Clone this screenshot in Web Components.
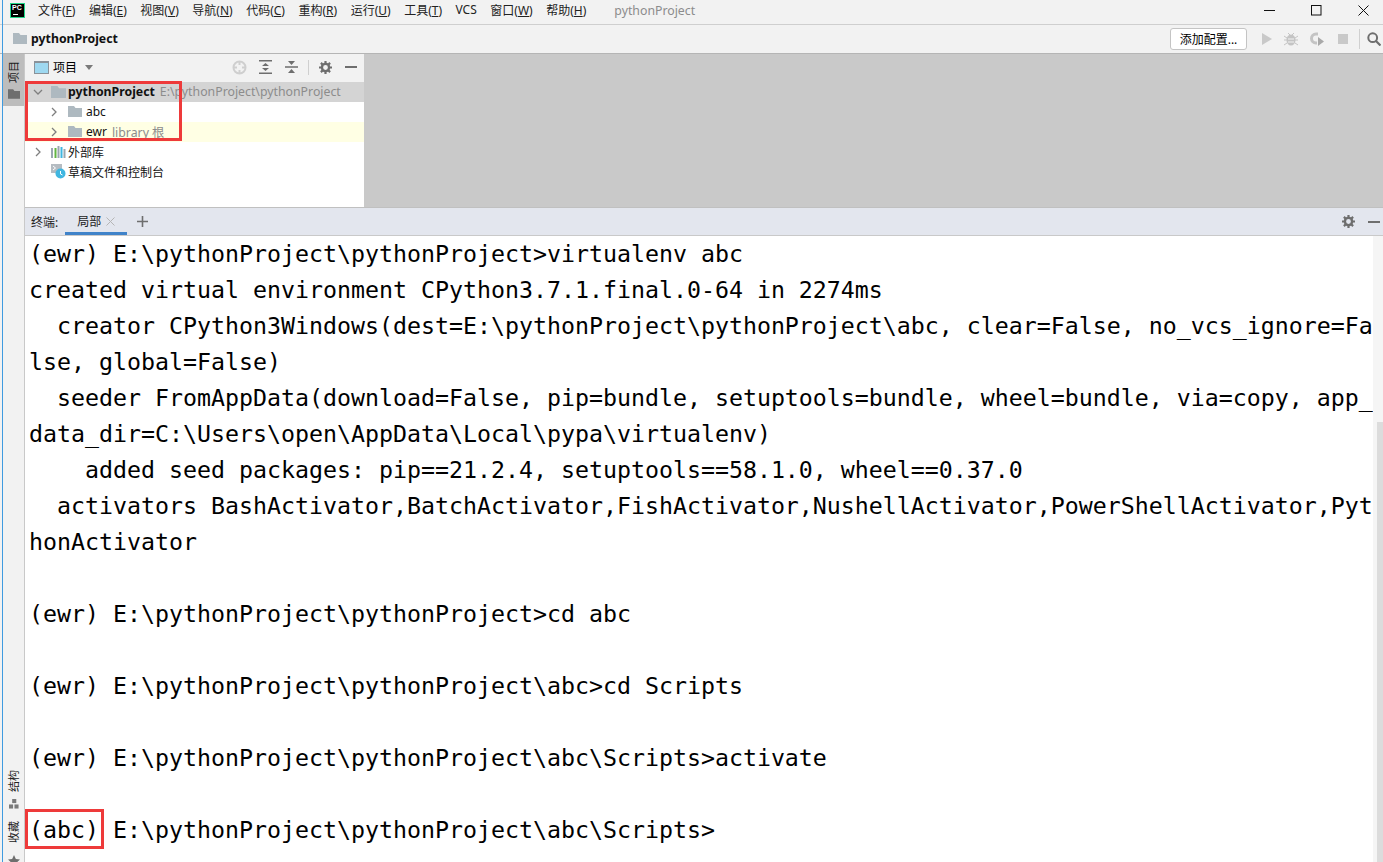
<!DOCTYPE html>
<html><head><meta charset="utf-8">
<style>
html,body{margin:0;padding:0;height:100%;overflow:hidden;background:#f2f2f2}
body{font-family:"Noto Sans","Noto Sans CJK SC",sans-serif;color:#000}
ide-window{height:862px}
</style></head><body>
<ide-window>
  <title-bar slot="title"></title-bar>
  <nav-bar slot="nav"></nav-bar>
  <side-stripe slot="stripe"></side-stripe>
  <project-panel slot="project"></project-panel>
  <terminal-panel slot="terminal">(ewr) E:\pythonProject\pythonProject&gt;virtualenv abc
created virtual environment CPython3.7.1.final.0-64 in 2274ms
  creator CPython3Windows(dest=E:\pythonProject\pythonProject\abc, clear=False, no_vcs_ignore=Fa
lse, global=False)
  seeder FromAppData(download=False, pip=bundle, setuptools=bundle, wheel=bundle, via=copy, app_
data_dir=C:\Users\open\AppData\Local\pypa\virtualenv)
    added seed packages: pip==21.2.4, setuptools==58.1.0, wheel==0.37.0
  activators BashActivator,BatchActivator,FishActivator,NushellActivator,PowerShellActivator,Pyt
honActivator

(ewr) E:\pythonProject\pythonProject&gt;cd abc

(ewr) E:\pythonProject\pythonProject\abc&gt;cd Scripts

(ewr) E:\pythonProject\pythonProject\abc\Scripts&gt;activate

(abc) E:\pythonProject\pythonProject\abc\Scripts&gt;</terminal-panel>
</ide-window>
<script>
const sans = '"Noto Sans","Noto Sans CJK SC",sans-serif';
const folder = (w, h, c) => `<svg width="${w}" height="${h}" viewBox="0 0 14 11"><path fill="${c}" d="M0 0h6l1.5 2H14v9H0z"/></svg>`;
const chev = d => `<svg width="10" height="10" viewBox="0 0 10 10" fill="none" stroke="#7f7f7f" stroke-width="1.3"><path d="${d}"/></svg>`;
const gear = `<svg width="13" height="13" viewBox="0 0 13 13"><circle cx="6.5" cy="6.5" r="3.6" fill="none" stroke="#6e6e6e" stroke-width="2.4"/><path d="M6.5 0v3M6.5 10v3M0 6.5h3M10 6.5h3M1.9 1.9L4 4M9 9l2.1 2.1M1.9 11.1L4 9M9 4l2.1-2.1" stroke="#6e6e6e" stroke-width="2.2"/></svg>`;

class IdeWindow extends HTMLElement {
  connectedCallback() {
    this.attachShadow({ mode: 'open' });
    this.shadowRoot.innerHTML = `
      <style>
        :host { display: flex; flex-direction: column; width: 1383px; position: relative; overflow: hidden; }
        .body { flex: 1; display: flex; min-height: 0; }
        .main { flex: 1; display: flex; flex-direction: column; min-width: 0; }
        .mark { position: absolute; border: 3px solid #ee3a3a; box-sizing: border-box; pointer-events: none; }
        .edge { position: absolute; left: 2px; top: 0; bottom: 0; width: 1px; background: #3f9be0; }
      </style>
      <slot name="title"></slot>
      <slot name="nav"></slot>
      <div class="body">
        <slot name="stripe"></slot>
        <div class="main">
          <slot name="project"></slot>
          <slot name="terminal"></slot>
        </div>
      </div>
      <div class="edge"></div>
      <div class="mark" style="left:25px;top:81px;width:157px;height:60px"></div>
      <div class="mark" style="left:25px;top:809px;width:79px;height:40px"></div>
    `;
  }
}

class TitleBar extends HTMLElement {
  connectedCallback() {
    this.attachShadow({ mode: 'open' });
    const items = ['文件(F)','编辑(E)','视图(V)','导航(N)','代码(C)','重构(R)','运行(U)','工具(T)','VCS','窗口(W)','帮助(H)'];
    this.shadowRoot.innerHTML = `
      <style>
        :host { display: flex; align-items: center; height: 25px; box-sizing: border-box; padding: 0 0 4px 10px; border-bottom: 1px solid #cfcfcf; background: #f2f2f2; font: 12px ${sans}; color: #222; }
        .logo { width: 15px; height: 15px; background: #000; border: 1px solid #21d789; box-sizing: border-box; color: #fff; font: bold 7px/8px "Liberation Sans"; padding-left: 1px; position: relative; margin-right: 13px; overflow: hidden; }
        .logo i { position: absolute; left: 2px; bottom: 2px; width: 5px; height: 1px; background: #fff; }
        .menu { display: flex; gap: 13.5px; }
        .menu span { white-space: nowrap; }
        .name { color: #8c8c8c; margin-left: 28px; font-size: 12.3px; }
        .ctl { margin-left: auto; display: flex; align-items: center; }
        .ctl svg { display: block; }
      </style>
      <div class="logo">PC<i></i></div>
      <div class="menu">${items.map(t => `<span>${t.replace(/\((.)\)/, '(<u>$1</u>)')}</span>`).join('')}</div>
      <div class="name">pythonProject</div>
      <div class="ctl">
        <svg width="11" height="11" style="margin-right:36px"><path d="M0 5.5h11" stroke="#111"/></svg>
        <svg width="11" height="11" style="margin-right:36px"><rect x=".5" y=".5" width="9.5" height="9.5" fill="none" stroke="#111"/></svg>
        <svg width="11" height="11" style="margin-right:14px"><path d="M.5.5l10 10M10.5.5l-10 10" stroke="#111"/></svg>
      </div>
    `;
  }
}

class NavBar extends HTMLElement {
  connectedCallback() {
    this.attachShadow({ mode: 'open' });
    this.shadowRoot.innerHTML = `
      <style>
        :host { display: flex; align-items: center; height: 28px; background: #f2f2f2; border-bottom: 1px solid #b5b5b5; font: 12px ${sans}; padding-left: 13px; }
        .folder { margin-bottom: 2px; }
        .crumb { margin: 0 0 2px 4px; font-weight: bold; font-size: 12.3px; color: #111; }
        .right { margin-left: auto; display: flex; align-items: center; }
        .btn { width: 77px; height: 22px; box-sizing: border-box; border: 1px solid #c4c4c4; border-radius: 3px; background: #fff; display: flex; align-items: center; justify-content: center; margin-right: 14px; }
        svg { display: block; }
      </style>
      <div class="folder">${folder(14, 11, '#aeb9c0')}</div>
      <div class="crumb">pythonProject</div>
      <div class="right">
        <div class="btn">添加配置...</div>
        <svg width="12" height="12" viewBox="0 0 12 12" style="margin-right:11px"><path d="M1 0l10 6-10 6z" fill="#c9c9c9"/></svg>
        <svg width="14" height="14" viewBox="0 0 14 14" style="margin-right:12px"><ellipse cx="7" cy="8" rx="4.5" ry="5.5" fill="#c4c4c4"/><path d="M0 4l3 2M14 4l-3 2M0 8h3M14 8h-3M0 13l3-2M14 13l-3-2M4 1l2 2M10 1L8 3" stroke="#c4c4c4"/><path d="M4 7h6M4 10h6" stroke="#f2f2f2"/></svg>
        <svg width="14" height="14" viewBox="0 0 14 14" style="margin-right:14px"><path d="M8 0.5H6A5 5 0 0 0 6 12.5H7V9.5H6A2 2 0 0 1 6 3.5H8z" fill="#c4c4c4"/><path d="M8 5l6 4.5-6 4.5z" fill="#a9a9a9"/></svg>
        <svg width="10" height="10" style="margin-right:11px"><rect width="10" height="10" fill="#c9c9c9"/></svg>
        <div style="width:1px;height:20px;background:#d0d0d0;margin-right:7px"></div>
        <svg width="14" height="14" viewBox="0 0 14 14" style="margin-right:2px"><circle cx="5.7" cy="5.7" r="4.4" fill="none" stroke="#6e6e6e" stroke-width="2"/><path d="M9 9l4.5 4.5" stroke="#6e6e6e" stroke-width="2.2"/></svg>
      </div>
    `;
  }
}

class SideStripe extends HTMLElement {
  connectedCallback() {
    this.attachShadow({ mode: 'open' });
    this.shadowRoot.innerHTML = `
      <style>
        :host { display: flex; flex-direction: column; width: 25px; box-sizing: border-box; padding-left: 3px; background: #f2f2f2; border-right: 1px solid #c9c9c9; font: 11px ${sans}; color: #222; overflow: hidden; }
        .tab { display: flex; flex-direction: column; align-items: center; gap: 7px; width: 21px; flex: none; }
        .tab.on { background: #bdbdbd; height: 52px; padding-top: 7px; gap: 6px; box-sizing: border-box; }
        .rot { writing-mode: vertical-rl; text-orientation: sideways; transform: rotate(180deg); line-height: 12px; }
        .fill { flex: 1; }
        svg { display: block; flex: none; }
      </style>
      <div class="tab on">
        <span class="rot">项目</span>
        ${folder(12, 10, '#6e6e6e')}
      </div>
      <div class="fill"></div>
      <div class="tab" style="margin-bottom:12px">
        <span class="rot">结构</span>
        <svg width="10" height="10" viewBox="0 0 11 11" fill="#7a7a7a"><rect x="3.5" y="0" width="4.5" height="4.5"/><rect x="0" y="6" width="4.5" height="4.5"/><rect x="6" y="6" width="4.5" height="4.5"/></svg>
      </div>
      <div class="tab" style="gap:12px;margin-bottom:-5px">
        <span class="rot">收藏</span>
        <svg width="12" height="12" viewBox="0 0 11 11"><path d="M5.5 0l1.7 3.7 3.8.4-2.8 2.6.8 3.9-3.5-2-3.5 2 .8-3.9L0 4.1l3.8-.4z" fill="#6e6e6e"/></svg>
      </div>
    `;
  }
}

class TreeRow extends HTMLElement {
  connectedCallback() {
    this.attachShadow({ mode: 'open' });
    this.shadowRoot.innerHTML = `
      <style>
        :host { display: flex; align-items: center; height: 20px; box-sizing: border-box; padding: 0 0 1px var(--pad, 0); white-space: nowrap; font: 12px ${sans}; color: #111; }
        :host([sel]) { background: #d4d4d4; }
        :host([lib]) { background: #ffffe4; }
        ::slotted(b) { font-weight: bold; font-size: 12.3px; }
        ::slotted(em) { font-style: normal; color: #8c8c8c; margin-left: 5px; font-size: 12.3px; }
        .c { width: 10px; height: 10px; display: block; margin-right: var(--gap, 8px); flex: none; }
        .i { margin-right: var(--igap, 4px); display: flex; }
      </style>
      <span class="c"><slot name="chev"></slot></span>
      <span class="i"><slot name="icon"></slot></span>
      <slot></slot>
    `;
  }
}

class ProjectPanel extends HTMLElement {
  connectedCallback() {
    this.attachShadow({ mode: 'open' });
    const right = chev('M3 1l4 4-4 4');
    const down = chev('M1 3l4 4 4-4');
    this.shadowRoot.innerHTML = `
      <style>
        :host { display: flex; height: 154px; background: #c9c9c9; border-bottom: 1px solid #c0c0c0; box-sizing: border-box; }
        .pane { width: 339px; background: #fff; display: flex; flex-direction: column; font: 12px ${sans}; }
        .head { height: 28px; box-sizing: border-box; padding: 0 0 2px 9px; background: #f2f2f2; display: flex; align-items: center; }
        .head .t { margin-left: 4px; }
        .tools { margin-left: auto; display: flex; align-items: center; padding-right: 7px; }
        .caret { width: 0; height: 0; border: 4px solid transparent; border-top: 5px solid #7a7a7a; border-bottom: 0; margin-left: 8px; }
        svg { display: block; }
        .bar { width: 1px; height: 15px; background: #cfcfcf; margin: 0 10px; }
      </style>
      <div class="pane">
        <div class="head">
          <svg width="15" height="13" viewBox="0 0 15 13"><rect x=".5" y=".5" width="14" height="12" fill="#9ed8f0" stroke="#8a9299"/><path d="M0 1h15" stroke="#8a9299" stroke-width="2"/></svg>
          <span class="t">项目</span><span class="caret"></span>
          <div class="tools">
            <svg width="15" height="15" viewBox="0 0 15 15" fill="none" stroke="#cfcfcf" stroke-width="2" style="margin-right:12px"><circle cx="7.5" cy="7.5" r="6"/><path d="M7.5 1v4M7.5 10v4M1 7.5h4M10 7.5h4"/></svg>
            <svg width="13" height="14" viewBox="0 0 13 14" fill="#6e6e6e" style="margin-right:13px"><path d="M0 0h13v1.4H0zM0 12.6h13V14H0zM3 6l3.5-3L10 6zM3 8l3.5 3L10 8z"/></svg>
            <svg width="13" height="14" viewBox="0 0 13 14" fill="#6e6e6e"><path d="M0 6.3h13v1.4H0zM3 1h7L6.5 5zM3 13h7L6.5 9z"/></svg>
            <div class="bar"></div>
            <span style="margin-right:13px">${gear}</span>
            <svg width="12" height="2"><rect width="12" height="2" fill="#6e6e6e"/></svg>
          </div>
        </div>
        <tree-row sel style="--pad:8px;--gap:8px;--igap:2px"><span slot="chev">${down}</span><span slot="icon">${folder(15, 12, '#aeb9c0')}</span><b>pythonProject</b><em>E:\\pythonProject\\pythonProject</em></tree-row>
        <tree-row style="--pad:24px;--gap:9px"><span slot="chev">${right}</span><span slot="icon">${folder(14, 11, '#aeb9c0')}</span>abc</tree-row>
        <tree-row lib style="--pad:24px;--gap:9px"><span slot="chev">${right}</span><span slot="icon">${folder(14, 11, '#aeb9c0')}</span>ewr<em>library 根</em></tree-row>
        <tree-row style="--pad:8px;--gap:8px;--igap:2px"><span slot="chev">${right}</span><span slot="icon"><svg width="15" height="12" viewBox="0 0 15 12"><path d="M1 2v10" stroke="#9aa7b0" stroke-width="2"/><path d="M4.5 2v10" stroke="#62b543" stroke-width="2"/><path d="M7.5 0v12" stroke="#9aa7b0" stroke-width="2"/><path d="M10.5 1v11" stroke="#40b6e0" stroke-width="2"/><path d="M13.5 3v9" stroke="#9aa7b0" stroke-width="2"/></svg></span>外部库</tree-row>
        <tree-row style="--pad:8px;--gap:8px;--igap:2px"><span slot="icon"><svg width="15" height="15" viewBox="0 0 15 15"><rect x="0" y="0" width="11" height="9" fill="#b5bcc2"/><path d="M2 2l2.5 2L2 6" fill="none" stroke="#fff"/><circle cx="9.5" cy="9.5" r="5" fill="#40b6e0"/><path d="M9.5 7v3l2 1" fill="none" stroke="#fff"/></svg></span>草稿文件和控制台</tree-row>
      </div>
    `;
  }
}

class TerminalPanel extends HTMLElement {
  connectedCallback() {
    this.attachShadow({ mode: 'open' });
    this.shadowRoot.innerHTML = `
      <style>
        :host { display: flex; flex-direction: column; flex: 1; min-height: 0; background: #fff; }
        .head { height: 27px; background: #e3e6ee; border-bottom: 1px solid #c9c9c9; display: flex; align-items: stretch; font: 12px ${sans}; color: #222; padding-left: 6px; }
        .lbl { align-self: center; }
        .tab { margin-left: 7px; width: 62px; box-sizing: border-box; padding-left: 12px; display: flex; align-items: center; gap: 5px; border-bottom: 3px solid #4083c9; padding-top: 2px; }
        .plus { align-self: center; margin-left: 10px; display: block; }
        .tools { margin-left: auto; display: flex; align-items: center; gap: 13px; padding-right: 3px; }
        svg { display: block; }
        .body { flex: 1; display: flex; min-height: 0; }
        pre { flex: 1; margin: 0; padding: 0 0 0 4px; font: 23.25px/36px "DejaVu Sans Mono", monospace; color: #000; overflow: hidden; }
        .scroll { width: 10px; background: #f5f5f5; display: flex; flex-direction: column; justify-content: flex-end; align-items: flex-end; }
        .thumb { height: 440px; width: 6px; background: #dcdcdc; }
      </style>
      <div class="head">
        <span class="lbl">终端:</span>
        <div class="tab"><span>局部</span><svg width="9" height="9"><path d="M.5.5l8 8M8.5.5l-8 8" stroke="#b5b5b5"/></svg></div>
        <svg class="plus" width="11" height="11"><path d="M5.5 0v11M0 5.5h11" stroke="#6e6e6e" stroke-width="1.6"/></svg>
        <div class="tools">
          ${gear}
          <svg width="12" height="2"><rect width="12" height="2" fill="#6e6e6e"/></svg>
        </div>
      </div>
      <div class="body"><pre><slot></slot></pre><div class="scroll"><div class="thumb"></div></div></div>
    `;
  }
}

customElements.define('ide-window', IdeWindow);
customElements.define('title-bar', TitleBar);
customElements.define('nav-bar', NavBar);
customElements.define('side-stripe', SideStripe);
customElements.define('tree-row', TreeRow);
customElements.define('project-panel', ProjectPanel);
customElements.define('terminal-panel', TerminalPanel);
</script>
</body></html>
